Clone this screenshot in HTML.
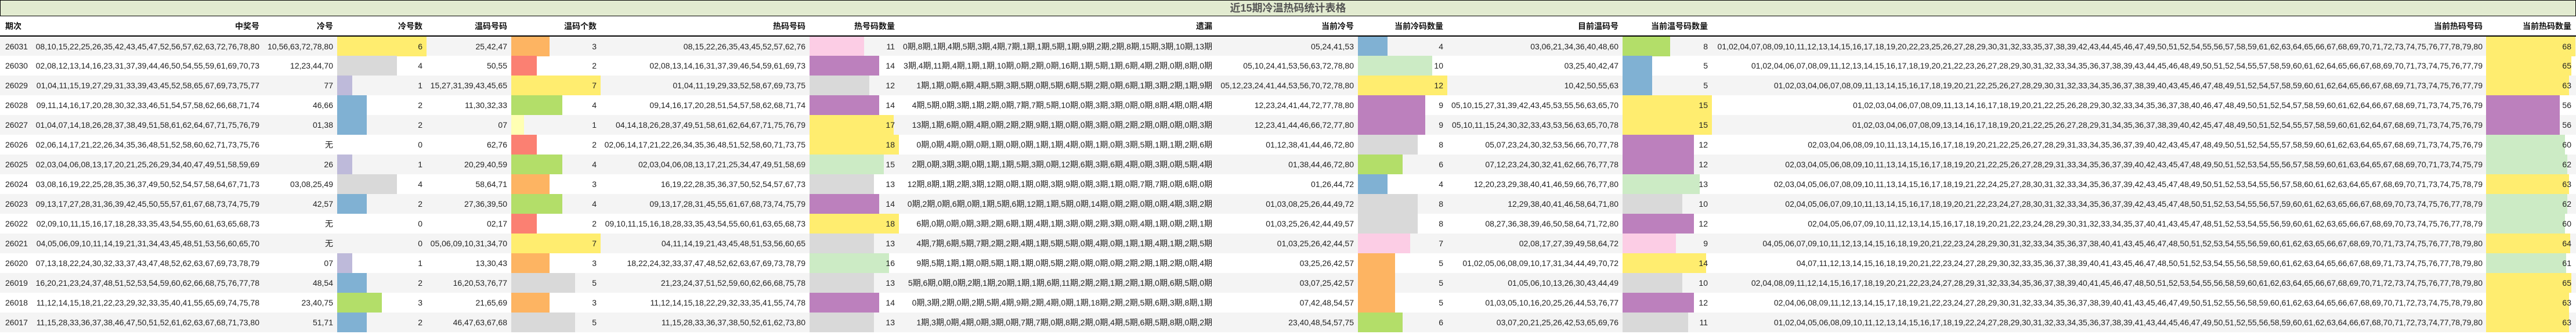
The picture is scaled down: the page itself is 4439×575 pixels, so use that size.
<!DOCTYPE html>
<html><head><meta charset="utf-8">
<style>
*{margin:0;padding:0;box-sizing:border-box}
body{width:4439px;height:575px;background:#fff;overflow:hidden;font-family:"Liberation Sans","Noto Sans CJK SC",sans-serif;font-size:14px;color:#222}
.title{height:28px;border-top:1px solid #000;border-bottom:1px solid #000;border-left:1px solid #000;border-right:1px solid #000;background:#e2ebd0;text-align:center;font-size:18px;font-weight:bold;color:#555;line-height:26px}
table{border-collapse:collapse;table-layout:fixed;width:4439px}
td,th{height:34px;padding:0 7px 0 0;text-align:right;white-space:nowrap;overflow:visible;position:relative;vertical-align:middle}
th{font-weight:bold;border-bottom:2px solid #000;color:#111}
th.l,td.l{text-align:left;padding-left:9px}
td.b,th.b{padding-right:9px}
tr.o td{background:#f4f4f4}
.bar{position:absolute;left:0;top:0;height:34px;z-index:0}
.n{position:relative;z-index:1}
.Y{background:#ffed6f}.G{background:#d9d9d9}.L{background:#bebada}.B{background:#80b1d3}.O{background:#fdb462}.S{background:#fb8072}.R{background:#b3de69}.P{background:#fccde5}.U{background:#bc80bd}.C{background:#ccebc5}.W{background:#ffffb3}
</style></head><body>
<div class="title">近15期冷温热码统计表格</div>
<table>
<colgroup><col style="width:55px"><col style="width:397px"><col style="width:129px"><col style="width:156px"><col style="width:144px"><col style="width:156px"><col style="width:358px"><col style="width:156px"><col style="width:542px"><col style="width:247px"><col style="width:156px"><col style="width:300px"><col style="width:156px"><col style="width:1332px"><col style="width:155px"></colgroup>
<tr><th class="l">期次</th><th style="padding-right:5px">中奖号</th><th>冷号</th><th class="b">冷号数</th><th>温码号码</th><th class="b">温码个数</th><th>热码号码</th><th class="b">热号码数量</th><th style="padding-right:4px">遗漏</th><th>当前冷号</th><th class="b">当前冷码数量</th><th>目前温码号</th><th class="b">当前温号码数量</th><th style="padding-right:6px">当前热码号码</th><th class="b" style="padding-right:8px">当前热码数量</th></tr>

<tr class="o"><td class="l">26031</td><td style="padding-right:5px">08,10,15,22,25,26,35,42,43,45,47,52,56,57,62,63,72,76,78,80</td><td>10,56,63,72,78,80</td><td class="b"><div class="bar Y" style="width:154px"></div><span class="n">6</span></td><td>25,42,47</td><td class="b"><div class="bar O" style="width:66px"></div><span class="n">3</span></td><td>08,15,22,26,35,43,45,52,57,62,76</td><td class="b"><div class="bar P" style="width:94px"></div><span class="n">11</span></td><td style="padding-right:4px">0期,8期,1期,4期,5期,3期,4期,7期,1期,1期,5期,1期,9期,2期,2期,8期,15期,3期,10期,13期</td><td>05,24,41,53</td><td class="b"><div class="bar B" style="width:51px"></div><span class="n">4</span></td><td>03,06,21,34,36,40,48,60</td><td class="b"><div class="bar R" style="width:82px"></div><span class="n">8</span></td><td style="padding-right:6px">01,02,04,07,08,09,10,11,12,13,14,15,16,17,18,19,20,22,23,25,26,27,28,29,30,31,32,33,35,37,38,39,42,43,44,45,46,47,49,50,51,52,54,55,56,57,58,59,61,62,63,64,65,66,67,68,69,70,71,72,73,74,75,76,77,78,79,80</td><td class="b" style="padding-right:8px"><div class="bar Y" style="width:154px"></div><span class="n">68</span></td></tr>

<tr><td class="l">26030</td><td style="padding-right:5px">02,08,12,13,14,16,23,31,37,39,44,46,50,54,55,59,61,69,70,73</td><td>12,23,44,70</td><td class="b"><div class="bar G" style="width:103px"></div><span class="n">4</span></td><td>50,55</td><td class="b"><div class="bar S" style="width:44px"></div><span class="n">2</span></td><td>02,08,13,14,16,31,37,39,46,54,59,61,69,73</td><td class="b"><div class="bar U" style="width:120px"></div><span class="n">14</span></td><td style="padding-right:4px">3期,4期,11期,4期,1期,1期,10期,0期,2期,0期,16期,1期,5期,1期,6期,4期,2期,0期,8期,0期</td><td>05,10,24,41,53,56,63,72,78,80</td><td class="b"><div class="bar C" style="width:128px"></div><span class="n">10</span></td><td>03,25,40,42,47</td><td class="b"><div class="bar B" style="width:51px"></div><span class="n">5</span></td><td style="padding-right:6px">01,02,04,06,07,08,09,11,12,13,14,15,16,17,18,19,20,21,22,23,26,27,28,29,30,31,32,33,34,35,36,37,38,39,43,44,45,46,48,49,50,51,52,54,55,57,58,59,60,61,62,64,65,66,67,68,69,70,71,73,74,75,76,77,79</td><td class="b" style="padding-right:8px"><div class="bar Y" style="width:147px"></div><span class="n">65</span></td></tr>

<tr class="o"><td class="l">26029</td><td style="padding-right:5px">01,04,11,15,19,27,29,31,33,39,43,45,52,58,65,67,69,73,75,77</td><td>77</td><td class="b"><div class="bar L" style="width:26px"></div><span class="n">1</span></td><td>15,27,31,39,43,45,65</td><td class="b"><div class="bar Y" style="width:154px"></div><span class="n">7</span></td><td>01,04,11,19,29,33,52,58,67,69,73,75</td><td class="b"><div class="bar G" style="width:103px"></div><span class="n">12</span></td><td style="padding-right:4px">1期,1期,0期,6期,4期,5期,3期,5期,0期,5期,6期,5期,2期,0期,6期,1期,3期,2期,1期,9期</td><td>05,12,23,24,41,44,53,56,70,72,78,80</td><td class="b"><div class="bar Y" style="width:154px"></div><span class="n">12</span></td><td>10,42,50,55,63</td><td class="b"><div class="bar B" style="width:51px"></div><span class="n">5</span></td><td style="padding-right:6px">01,02,03,04,06,07,08,09,11,13,14,15,16,17,18,19,20,21,22,25,26,27,28,29,30,31,32,33,34,35,36,37,38,39,40,43,45,46,47,48,49,51,52,54,57,58,59,60,61,62,64,65,66,67,68,69,71,73,74,75,76,77,79</td><td class="b" style="padding-right:8px"><div class="bar Y" style="width:143px"></div><span class="n">63</span></td></tr>

<tr><td class="l">26028</td><td style="padding-right:5px">09,11,14,16,17,20,28,30,32,33,46,51,54,57,58,62,66,68,71,74</td><td>46,66</td><td class="b"><div class="bar B" style="width:51px"></div><span class="n">2</span></td><td>11,30,32,33</td><td class="b"><div class="bar R" style="width:88px"></div><span class="n">4</span></td><td>09,14,16,17,20,28,51,54,57,58,62,68,71,74</td><td class="b"><div class="bar U" style="width:120px"></div><span class="n">14</span></td><td style="padding-right:4px">4期,5期,0期,3期,1期,2期,0期,7期,7期,5期,10期,0期,3期,3期,0期,0期,8期,4期,0期,4期</td><td>12,23,24,41,44,72,77,78,80</td><td class="b"><div class="bar U" style="width:116px"></div><span class="n">9</span></td><td>05,10,15,27,31,39,42,43,45,53,55,56,63,65,70</td><td class="b"><div class="bar Y" style="width:154px"></div><span class="n">15</span></td><td style="padding-right:6px">01,02,03,04,06,07,08,09,11,13,14,16,17,18,19,20,21,22,25,26,28,29,30,32,33,34,35,36,37,38,40,46,47,48,49,50,51,52,54,57,58,59,60,61,62,64,66,67,68,69,71,73,74,75,76,79</td><td class="b" style="padding-right:8px"><div class="bar U" style="width:127px"></div><span class="n">56</span></td></tr>

<tr class="o"><td class="l">26027</td><td style="padding-right:5px">01,04,07,14,18,26,28,37,38,49,51,58,61,62,64,67,71,75,76,79</td><td>01,38</td><td class="b"><div class="bar B" style="width:51px"></div><span class="n">2</span></td><td>07</td><td class="b"><div class="bar W" style="width:22px"></div><span class="n">1</span></td><td>04,14,18,26,28,37,49,51,58,61,62,64,67,71,75,76,79</td><td class="b"><div class="bar Y" style="width:145px"></div><span class="n">17</span></td><td style="padding-right:4px">13期,1期,6期,0期,4期,0期,2期,2期,9期,1期,0期,0期,3期,0期,2期,2期,0期,0期,0期,3期</td><td>12,23,41,44,46,66,72,77,80</td><td class="b"><div class="bar U" style="width:116px"></div><span class="n">9</span></td><td>05,10,11,15,24,30,32,33,43,53,56,63,65,70,78</td><td class="b"><div class="bar Y" style="width:154px"></div><span class="n">15</span></td><td style="padding-right:6px">01,02,03,04,06,07,08,09,13,14,16,17,18,19,20,21,22,25,26,27,28,29,31,34,35,36,37,38,39,40,42,45,47,48,49,50,51,52,54,55,57,58,59,60,61,62,64,67,68,69,71,73,74,75,76,79</td><td class="b" style="padding-right:8px"><div class="bar U" style="width:127px"></div><span class="n">56</span></td></tr>

<tr><td class="l">26026</td><td style="padding-right:5px">02,06,14,17,21,22,26,34,35,36,48,51,52,58,60,62,71,73,75,76</td><td>无</td><td class="b"><span class="n">0</span></td><td>62,76</td><td class="b"><div class="bar S" style="width:44px"></div><span class="n">2</span></td><td>02,06,14,17,21,22,26,34,35,36,48,51,52,58,60,71,73,75</td><td class="b"><div class="bar Y" style="width:154px"></div><span class="n">18</span></td><td style="padding-right:4px">0期,0期,4期,0期,0期,1期,0期,0期,1期,1期,4期,0期,1期,0期,3期,5期,1期,1期,2期,6期</td><td>01,12,38,41,44,46,72,80</td><td class="b"><div class="bar G" style="width:103px"></div><span class="n">8</span></td><td>05,07,23,24,30,32,53,56,66,70,77,78</td><td class="b"><div class="bar U" style="width:123px"></div><span class="n">12</span></td><td style="padding-right:6px">02,03,04,06,08,09,10,11,13,14,15,16,17,18,19,20,21,22,25,26,27,28,29,31,33,34,35,36,37,39,40,42,43,45,47,48,49,50,51,52,54,55,57,58,59,60,61,62,63,64,65,67,68,69,71,73,74,75,76,79</td><td class="b" style="padding-right:8px"><div class="bar C" style="width:136px"></div><span class="n">60</span></td></tr>

<tr class="o"><td class="l">26025</td><td style="padding-right:5px">02,03,04,06,08,13,17,20,21,25,26,29,34,40,47,49,51,58,59,69</td><td>26</td><td class="b"><div class="bar L" style="width:26px"></div><span class="n">1</span></td><td>20,29,40,59</td><td class="b"><div class="bar R" style="width:88px"></div><span class="n">4</span></td><td>02,03,04,06,08,13,17,21,25,34,47,49,51,58,69</td><td class="b"><div class="bar C" style="width:128px"></div><span class="n">15</span></td><td style="padding-right:4px">2期,0期,3期,3期,0期,1期,1期,5期,3期,0期,12期,6期,3期,6期,4期,0期,3期,0期,5期,4期</td><td>01,38,44,46,72,80</td><td class="b"><div class="bar R" style="width:77px"></div><span class="n">6</span></td><td>07,12,23,24,30,32,41,62,66,76,77,78</td><td class="b"><div class="bar U" style="width:123px"></div><span class="n">12</span></td><td style="padding-right:6px">02,03,04,05,06,08,09,10,11,13,14,15,16,17,18,19,20,21,22,25,26,27,28,29,31,33,34,35,36,37,39,40,42,43,45,47,48,49,50,51,52,53,54,55,56,57,58,59,60,61,63,64,65,67,68,69,70,71,73,74,75,79</td><td class="b" style="padding-right:8px"><div class="bar C" style="width:140px"></div><span class="n">62</span></td></tr>

<tr><td class="l">26024</td><td style="padding-right:5px">03,08,16,19,22,25,28,35,36,37,49,50,52,54,57,58,64,67,71,73</td><td>03,08,25,49</td><td class="b"><div class="bar G" style="width:103px"></div><span class="n">4</span></td><td>58,64,71</td><td class="b"><div class="bar O" style="width:66px"></div><span class="n">3</span></td><td>16,19,22,28,35,36,37,50,52,54,57,67,73</td><td class="b"><div class="bar G" style="width:111px"></div><span class="n">13</span></td><td style="padding-right:4px">12期,8期,1期,2期,3期,12期,0期,1期,0期,3期,9期,0期,3期,1期,0期,7期,7期,0期,6期,0期</td><td>01,26,44,72</td><td class="b"><div class="bar B" style="width:51px"></div><span class="n">4</span></td><td>12,20,23,29,38,40,41,46,59,66,76,77,80</td><td class="b"><div class="bar C" style="width:133px"></div><span class="n">13</span></td><td style="padding-right:6px">02,03,04,05,06,07,08,09,10,11,13,14,15,16,17,18,19,21,22,24,25,27,28,30,31,32,33,34,35,36,37,39,42,43,45,47,48,49,50,51,52,53,54,55,56,57,58,60,61,62,63,64,65,67,68,69,70,71,73,74,75,78,79</td><td class="b" style="padding-right:8px"><div class="bar Y" style="width:143px"></div><span class="n">63</span></td></tr>

<tr class="o"><td class="l">26023</td><td style="padding-right:5px">09,13,17,27,28,31,36,39,42,45,50,55,57,61,67,68,73,74,75,79</td><td>42,57</td><td class="b"><div class="bar B" style="width:51px"></div><span class="n">2</span></td><td>27,36,39,50</td><td class="b"><div class="bar R" style="width:88px"></div><span class="n">4</span></td><td>09,13,17,28,31,45,55,61,67,68,73,74,75,79</td><td class="b"><div class="bar U" style="width:120px"></div><span class="n">14</span></td><td style="padding-right:4px">0期,2期,0期,6期,0期,1期,5期,6期,12期,1期,5期,0期,14期,0期,2期,0期,0期,4期,3期,2期</td><td>01,03,08,25,26,44,49,72</td><td class="b"><div class="bar G" style="width:103px"></div><span class="n">8</span></td><td>12,29,38,40,41,46,58,64,71,80</td><td class="b"><div class="bar G" style="width:103px"></div><span class="n">10</span></td><td style="padding-right:6px">02,04,05,06,07,09,10,11,13,14,15,16,17,18,19,20,21,22,23,24,27,28,30,31,32,33,34,35,36,37,39,42,43,45,47,48,50,51,52,53,54,55,56,57,59,60,61,62,63,65,66,67,68,69,70,73,74,75,76,77,78,79</td><td class="b" style="padding-right:8px"><div class="bar C" style="width:140px"></div><span class="n">62</span></td></tr>

<tr><td class="l">26022</td><td style="padding-right:5px">02,09,10,11,15,16,17,18,28,33,35,43,54,55,60,61,63,65,68,73</td><td>无</td><td class="b"><span class="n">0</span></td><td>02,17</td><td class="b"><div class="bar S" style="width:44px"></div><span class="n">2</span></td><td>09,10,11,15,16,18,28,33,35,43,54,55,60,61,63,65,68,73</td><td class="b"><div class="bar Y" style="width:154px"></div><span class="n">18</span></td><td style="padding-right:4px">6期,0期,0期,0期,3期,2期,6期,1期,4期,1期,3期,0期,2期,3期,0期,4期,1期,0期,2期,1期</td><td>01,03,25,26,42,44,49,57</td><td class="b"><div class="bar G" style="width:103px"></div><span class="n">8</span></td><td>08,27,36,38,39,46,50,58,64,71,72,80</td><td class="b"><div class="bar U" style="width:123px"></div><span class="n">12</span></td><td style="padding-right:6px">02,04,05,06,07,09,10,11,12,13,14,15,16,17,18,19,20,21,22,23,24,28,29,30,31,32,33,34,35,37,40,41,43,45,47,48,51,52,53,54,55,56,59,60,61,62,63,65,66,67,68,69,70,73,74,75,76,77,78,79</td><td class="b" style="padding-right:8px"><div class="bar C" style="width:136px"></div><span class="n">60</span></td></tr>

<tr class="o"><td class="l">26021</td><td style="padding-right:5px">04,05,06,09,10,11,14,19,21,31,34,43,45,48,51,53,56,60,65,70</td><td>无</td><td class="b"><span class="n">0</span></td><td>05,06,09,10,31,34,70</td><td class="b"><div class="bar Y" style="width:154px"></div><span class="n">7</span></td><td>04,11,14,19,21,43,45,48,51,53,56,60,65</td><td class="b"><div class="bar G" style="width:111px"></div><span class="n">13</span></td><td style="padding-right:4px">4期,7期,6期,5期,7期,2期,2期,4期,1期,5期,5期,0期,4期,0期,1期,1期,4期,1期,2期,5期</td><td>01,03,25,26,42,44,57</td><td class="b"><div class="bar P" style="width:90px"></div><span class="n">7</span></td><td>02,08,17,27,39,49,58,64,72</td><td class="b"><div class="bar P" style="width:92px"></div><span class="n">9</span></td><td style="padding-right:6px">04,05,06,07,09,10,11,12,13,14,15,16,18,19,20,21,22,23,24,28,29,30,31,32,33,34,35,36,37,38,40,41,43,45,46,47,48,50,51,52,53,54,55,56,59,60,61,62,63,65,66,67,68,69,70,71,73,74,75,76,77,78,79,80</td><td class="b" style="padding-right:8px"><div class="bar Y" style="width:145px"></div><span class="n">64</span></td></tr>

<tr><td class="l">26020</td><td style="padding-right:5px">07,13,18,22,24,30,32,33,37,43,47,48,52,62,63,67,69,73,78,79</td><td>07</td><td class="b"><div class="bar L" style="width:26px"></div><span class="n">1</span></td><td>13,30,43</td><td class="b"><div class="bar O" style="width:66px"></div><span class="n">3</span></td><td>18,22,24,32,33,37,47,48,52,62,63,67,69,73,78,79</td><td class="b"><div class="bar C" style="width:137px"></div><span class="n">16</span></td><td style="padding-right:4px">9期,5期,1期,1期,0期,5期,1期,1期,0期,5期,2期,0期,0期,0期,2期,2期,1期,2期,0期,4期</td><td>03,25,26,42,57</td><td class="b"><div class="bar O" style="width:64px"></div><span class="n">5</span></td><td>01,02,05,06,08,09,10,17,31,34,44,49,70,72</td><td class="b"><div class="bar Y" style="width:144px"></div><span class="n">14</span></td><td style="padding-right:6px">04,07,11,12,13,14,15,16,18,19,20,21,22,23,24,27,28,29,30,32,33,35,36,37,38,39,40,41,43,45,46,47,48,50,51,52,53,54,55,56,58,59,60,61,62,63,64,65,66,67,68,69,71,73,74,75,76,77,78,79,80</td><td class="b" style="padding-right:8px"><div class="bar C" style="width:138px"></div><span class="n">61</span></td></tr>

<tr class="o"><td class="l">26019</td><td style="padding-right:5px">16,20,21,23,24,37,48,51,52,53,54,59,60,62,66,68,75,76,77,78</td><td>48,54</td><td class="b"><div class="bar B" style="width:51px"></div><span class="n">2</span></td><td>16,20,53,76,77</td><td class="b"><div class="bar G" style="width:110px"></div><span class="n">5</span></td><td>21,23,24,37,51,52,59,60,62,66,68,75,78</td><td class="b"><div class="bar G" style="width:111px"></div><span class="n">13</span></td><td style="padding-right:4px">5期,6期,0期,0期,2期,1期,20期,1期,1期,6期,11期,2期,2期,1期,2期,1期,0期,6期,5期,0期</td><td>03,07,25,42,57</td><td class="b"><div class="bar O" style="width:64px"></div><span class="n">5</span></td><td>01,05,06,10,13,26,30,43,44,49</td><td class="b"><div class="bar G" style="width:103px"></div><span class="n">10</span></td><td style="padding-right:6px">02,04,08,09,11,12,14,15,16,17,18,19,20,21,22,23,24,27,28,29,31,32,33,34,35,36,37,38,39,40,41,45,46,47,48,50,51,52,53,54,55,56,58,59,60,61,62,63,64,65,66,67,68,69,70,71,72,73,74,75,76,77,78,79,80</td><td class="b" style="padding-right:8px"><div class="bar Y" style="width:147px"></div><span class="n">65</span></td></tr>

<tr><td class="l">26018</td><td style="padding-right:5px">11,12,14,15,18,21,22,23,29,32,33,35,40,41,55,65,69,74,75,78</td><td>23,40,75</td><td class="b"><div class="bar R" style="width:77px"></div><span class="n">3</span></td><td>21,65,69</td><td class="b"><div class="bar O" style="width:66px"></div><span class="n">3</span></td><td>11,12,14,15,18,22,29,32,33,35,41,55,74,78</td><td class="b"><div class="bar U" style="width:120px"></div><span class="n">14</span></td><td style="padding-right:4px">0期,3期,2期,0期,2期,5期,4期,9期,2期,4期,0期,1期,18期,2期,2期,5期,6期,3期,8期,1期</td><td>07,42,48,54,57</td><td class="b"><div class="bar O" style="width:64px"></div><span class="n">5</span></td><td>01,03,05,10,16,20,25,26,44,53,76,77</td><td class="b"><div class="bar U" style="width:123px"></div><span class="n">12</span></td><td style="padding-right:6px">02,04,06,08,09,11,12,13,14,15,17,18,19,21,22,23,24,27,28,29,30,31,32,33,34,35,36,37,38,39,40,41,43,45,46,47,49,50,51,52,55,56,58,59,60,61,62,63,64,65,66,67,68,69,70,71,72,73,74,75,78,79,80</td><td class="b" style="padding-right:8px"><div class="bar Y" style="width:143px"></div><span class="n">63</span></td></tr>

<tr class="o"><td class="l">26017</td><td style="padding-right:5px">11,15,28,33,36,37,38,46,47,50,51,52,61,62,63,67,68,71,73,80</td><td>51,71</td><td class="b"><div class="bar B" style="width:51px"></div><span class="n">2</span></td><td>46,47,63,67,68</td><td class="b"><div class="bar G" style="width:110px"></div><span class="n">5</span></td><td>11,15,28,33,36,37,38,50,52,61,62,73,80</td><td class="b"><div class="bar G" style="width:111px"></div><span class="n">13</span></td><td style="padding-right:4px">1期,3期,0期,4期,0期,3期,0期,7期,7期,0期,8期,2期,0期,4期,5期,6期,5期,8期,0期,2期</td><td>23,40,48,54,57,75</td><td class="b"><div class="bar R" style="width:77px"></div><span class="n">6</span></td><td>03,07,20,21,25,26,42,53,65,69,76</td><td class="b"><div class="bar G" style="width:113px"></div><span class="n">11</span></td><td style="padding-right:6px">01,02,04,05,06,08,09,10,11,12,13,14,15,16,17,18,19,22,24,27,28,29,30,31,32,33,34,35,36,37,38,39,41,43,44,45,46,47,49,50,51,52,55,56,58,59,60,61,62,63,64,66,67,68,70,71,72,73,74,77,78,79,80</td><td class="b" style="padding-right:8px"><div class="bar Y" style="width:143px"></div><span class="n">63</span></td></tr>
</table>
</body></html>
